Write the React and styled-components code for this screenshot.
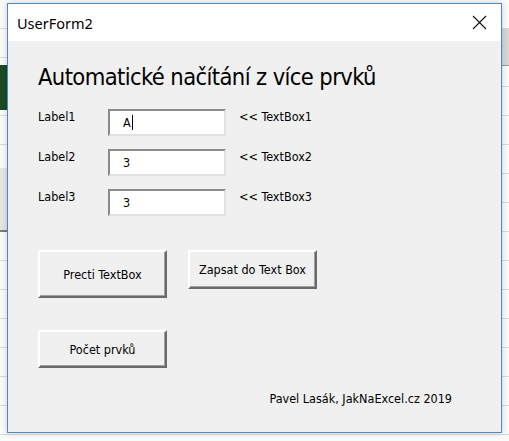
import styled, { createGlobalStyle } from "styled-components";

const GlobalStyle = createGlobalStyle`
  html, body {
    margin: 0;
    padding: 0;
  }
  body {
    font-family: "DejaVu Sans Condensed", "DejaVu Sans", sans-serif;
    color: #000;
  }
`;

// the excel sheet behind the form
const Sheet = styled.div`
  width: 509px;
  height: 441px;
  overflow: hidden;
  padding: 3px 0 0 7px;
  box-sizing: border-box;
  background:
    linear-gradient(#1d4a24, #1d4a24) 0 65px / 7px 45px no-repeat,
    linear-gradient(#e4e4e4, #e4e4e4) 0 168px / 7px 62px no-repeat,
    linear-gradient(#7a7a7a, #7a7a7a) 0 230px / 7px 2px no-repeat,
    linear-gradient(#d6d6d6, #d6d6d6) 502px 28px / 7px 37px no-repeat,
    linear-gradient(#9a9a9a, #9a9a9a) 502px 65px / 7px 1px no-repeat,
    repeating-linear-gradient(
      to bottom,
      transparent 0,
      transparent 28px,
      #d8d8d8 28px,
      #d8d8d8 29px
    ),
    #fafafa;
`;

const Window = styled.div`
  width: 495px;
  height: 430px;
  box-sizing: border-box;
  border: 1px solid #4a88c6;
  background: #f0f0f0;
  display: flex;
  flex-direction: column;
  box-shadow: 0 0 6px rgba(0, 0, 0, 0.18);
`;

const TitleBar = styled.div`
  height: 37px;
  flex: none;
  background: #fff;
  display: flex;
  align-items: center;
  justify-content: space-between;
  padding: 0 14px 0 9px;
  font-family: "Noto Sans", "Open Sans", sans-serif;
  font-size: 14.5px;
`;

const CloseIcon = () => (
  <svg width="15" height="15" viewBox="0 0 15 15">
    <path d="M1 1 L14 14 M14 1 L1 14" stroke="#111" strokeWidth="1.1" />
  </svg>
);

const Body = styled.div`
  flex: 1;
  display: flex;
  flex-direction: column;
  padding: 0 0 0 30px;
`;

const Heading = styled.h1`
  margin: 21px 0 0;
  font-weight: normal;
  font-size: 23.5px;
  line-height: 30px;
  letter-spacing: -0.6px;
  white-space: nowrap;
`;

const Fields = styled.div`
  margin-top: 17px;
  display: grid;
  grid-template-columns: 57px 118px auto;
  column-gap: 13px;
  row-gap: 13px;
  align-items: start;
  font-size: 12.5px;
`;

const Label = styled.div`
  line-height: 16px;
`;

const TextBox = styled.div`
  height: 27px;
  box-sizing: border-box;
  background: #fff;
  border-top: 2px solid #8a8a8a;
  border-left: 2px solid #8a8a8a;
  border-right: 2px solid #e2e2e2;
  border-bottom: 2px solid #e2e2e2;
  padding: 0 0 0 13px;
  display: flex;
  align-items: center;
  font-size: 12.5px;
`;

const Caret = styled.span`
  display: inline-block;
  width: 1px;
  height: 15px;
  background: #000;
  margin-left: 1px;
`;

const Buttons = styled.div`
  margin-top: 34px;
  display: flex;
  gap: 21px;
  align-items: flex-start;
`;

const Button = styled.div`
  width: 129px;
  height: ${(p) => p.$h}px;
  box-sizing: border-box;
  background: #f0f0f0;
  border-top: 2px solid #fff;
  border-left: 2px solid #fff;
  border-right: 2px solid #6a6a6a;
  border-bottom: 2px solid #6a6a6a;
  box-shadow: inset -1px -1px 0 #a0a0a0;
  display: flex;
  align-items: center;
  justify-content: center;
  font-size: 12.5px;
  margin-top: ${(p) => p.$top || 0}px;
`;

const Footer = styled.div`
  margin-top: 23px;
  padding-right: 49px;
  text-align: right;
  font-size: 12.5px;
`;

export default function App() {
  const rows = [
    { label: "Label1", value: "A", caret: true, note: "<< TextBox1" },
    { label: "Label2", value: "3", note: "<< TextBox2" },
    { label: "Label3", value: "3", note: "<< TextBox3" },
  ];

  return (
    <>
      <GlobalStyle />
      <Sheet>
        <Window>
          <TitleBar>
            <span>UserForm2</span>
            <CloseIcon />
          </TitleBar>
          <Body>
            <Heading>Automatické načítání z více prvků</Heading>
            <Fields>
              {rows.map((r) => [
                <Label key={r.label}>{r.label}</Label>,
                <TextBox key={r.label + "b"}>
                  {r.value}
                  {r.caret && <Caret />}
                </TextBox>,
                <Label key={r.label + "n"}>{r.note}</Label>,
              ])}
            </Fields>
            <Buttons>
              <Button $h={48}>Precti TextBox</Button>
              <Button $h={39}>Zapsat do Text Box</Button>
            </Buttons>
            <Button $h={38} $top={32}>
              Počet prvků
            </Button>
            <Footer>Pavel Lasák, JakNaExcel.cz 2019</Footer>
          </Body>
        </Window>
      </Sheet>
    </>
  );
}
